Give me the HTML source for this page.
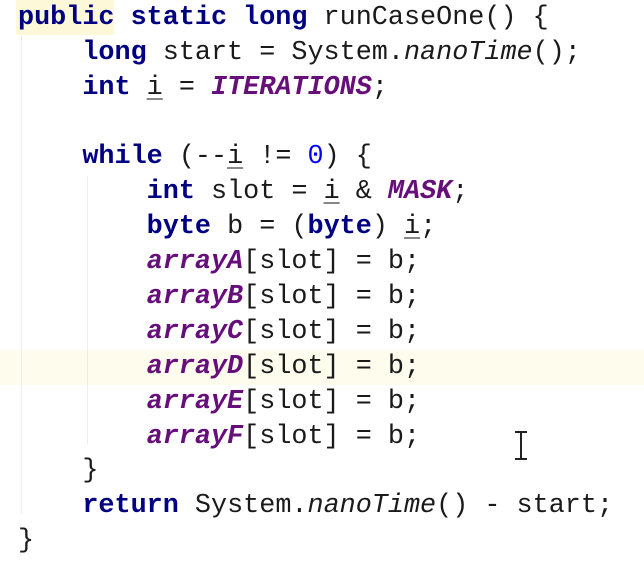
<!DOCTYPE html>
<html><head><meta charset="utf-8"><style>
html,body{margin:0;padding:0;background:#fff;width:644px;height:562px;overflow:hidden}
body{position:relative;font-family:"Liberation Mono","DejaVu Sans Mono",monospace;font-size:26.8px;color:#1a1a1a}
.l{position:absolute;left:18px;white-space:pre;height:35px;line-height:35px}
.k{color:#000080;font-weight:bold}
.f{color:#660e7a;font-weight:bold;font-style:italic}
.i{font-style:italic}
.n{color:#0000ff}
.u{text-decoration:underline;text-decoration-color:#888;text-underline-offset:4px}
.hl{position:absolute;left:0;width:644px;top:350px;height:35px;background:#fefcec}
.pb{position:absolute;left:16px;top:0;width:98px;height:35px;background:#fcf8d8}
.g{position:absolute;width:1px;background:#eeeeee}
.cur{position:absolute;left:520px;top:431px;width:2px;height:29px;background:#222}
.cur:before,.cur:after{content:"";position:absolute;left:-5px;width:12px;height:2px;background:#222}
.cur:before{top:0}.cur:after{bottom:0}
</style></head><body>
<div class="hl"></div>
<div class="pb"></div>
<div class="g" style="left:21px;top:36px;height:478px"></div>
<div class="g" style="left:87px;top:176px;height:268px"></div>
<div class="l" style="top:1px"><span class="k">public static long</span> runCaseOne() {</div>
<div class="l" style="top:36px">    <span class="k">long</span> start = System.<span class="i">nanoTime</span>();</div>
<div class="l" style="top:71px">    <span class="k">int</span> <span class="u">i</span> = <span class="f">ITERATIONS</span>;</div>
<div class="l" style="top:140px">    <span class="k">while</span> (--<span class="u">i</span> != <span class="n">0</span>) {</div>
<div class="l" style="top:175px">        <span class="k">int</span> slot = <span class="u">i</span> &amp; <span class="f">MASK</span>;</div>
<div class="l" style="top:210px">        <span class="k">byte</span> b = (<span class="k">byte</span>) <span class="u">i</span>;</div>
<div class="l" style="top:245px">        <span class="f">arrayA</span>[slot] = b;</div>
<div class="l" style="top:280px">        <span class="f">arrayB</span>[slot] = b;</div>
<div class="l" style="top:315px">        <span class="f">arrayC</span>[slot] = b;</div>
<div class="l" style="top:350px">        <span class="f">arrayD</span>[slot] = b;</div>
<div class="l" style="top:385px">        <span class="f">arrayE</span>[slot] = b;</div>
<div class="l" style="top:420px">        <span class="f">arrayF</span>[slot] = b;</div>
<div class="l" style="top:454px">    }</div>
<div class="l" style="top:489px">    <span class="k">return</span> System.<span class="i">nanoTime</span>() - start;</div>
<div class="l" style="top:524px">}</div>
<div class="cur"></div>
</body></html>
